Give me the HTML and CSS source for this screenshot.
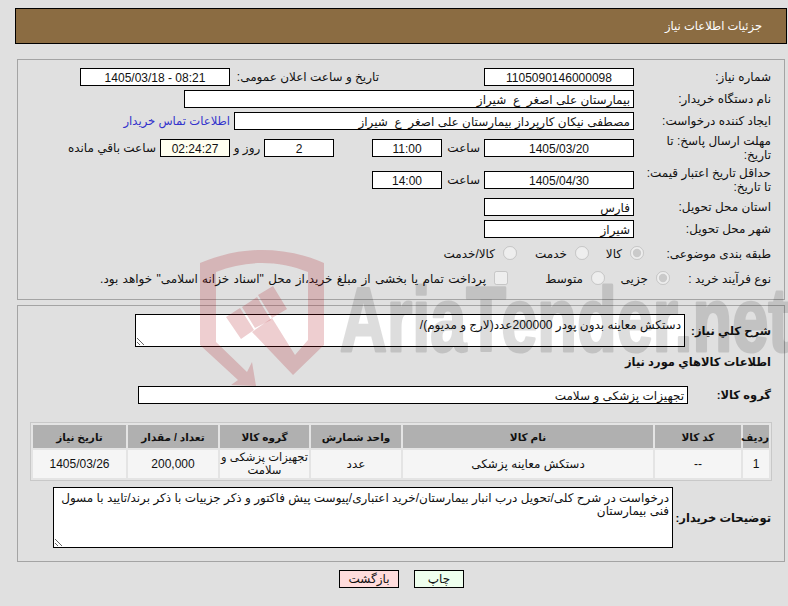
FILE: index.html
```html
<!DOCTYPE html>
<html lang="fa" dir="rtl">
<head>
<meta charset="utf-8">
<title>جزئیات اطلاعات نیاز</title>
<link rel="stylesheet" href="styles.css">
</head>
<body>
<div class="page">
  <header class="title-bar">جزئیات اطلاعات نیاز</header>

  <section class="panel panel-info">
    <div class="row">
      <div class="lbl">شماره نیاز:</div>
      <div class="box w150 center">1105090146000098</div>
      <div class="txt announce">تاریخ و ساعت اعلان عمومی:</div>
      <div class="box w150 center ltr">1405/03/18 - 08:21</div>
    </div>
    <div class="row">
      <div class="lbl">نام دستگاه خریدار:</div>
      <div class="box w450">بیمارستان علی اصغر&nbsp; ع&nbsp; شیراز</div>
    </div>
    <div class="row">
      <div class="lbl">ایجاد کننده درخواست:</div>
      <div class="box w400">مصطفی نیکان کارپرداز بیمارستان علی اصغر&nbsp; ع&nbsp; شیراز</div>
      <a class="link" href="#">اطلاعات تماس خریدار</a>
    </div>
    <div class="row row-tall">
      <div class="lbl">مهلت ارسال پاسخ: تا تاریخ:</div>
      <div class="box w150 center">1405/03/20</div>
      <div class="txt unit">ساعت</div>
      <div class="box w70 center">11:00</div>
      <div class="box w70 center after-gap">2</div>
      <div class="txt day">روز و</div>
      <div class="box w70 center ivory">02:24:27</div>
      <div class="txt remain">ساعت باقي مانده</div>
    </div>
    <div class="row row-tall">
      <div class="lbl">حداقل تاریخ اعتبار قیمت: تا تاریخ:</div>
      <div class="box w150 center">1405/04/30</div>
      <div class="txt unit">ساعت</div>
      <div class="box w70 center">14:00</div>
    </div>
    <div class="row">
      <div class="lbl">استان محل تحویل:</div>
      <div class="box w150">فارس</div>
    </div>
    <div class="row">
      <div class="lbl">شهر محل تحویل:</div>
      <div class="box w150">شیراز</div>
    </div>
    <div class="row row-radio">
      <div class="lbl lbl-kind">طبقه بندی موضوعی:</div>
      <label class="opt opt-a"><input type="radio" name="kind" checked disabled>کالا</label>
      <label class="opt opt-b"><input type="radio" name="kind" disabled>خدمت</label>
      <label class="opt"><input type="radio" name="kind" disabled>کالا/خدمت</label>
    </div>
    <div class="row">
      <div class="lbl lbl-proc">نوع فرآیند خرید :</div>
      <label class="opt opt-c"><input type="radio" name="proc" checked disabled>جزیی</label>
      <label class="opt opt-d"><input type="radio" name="proc" disabled>متوسط</label>
      <label class="opt opt-long"><input type="checkbox" disabled>پرداخت تمام یا بخشی از مبلغ خرید،از محل "اسناد خزانه اسلامی" خواهد بود.</label>
    </div>
  </section>

  <section class="panel panel-items">
    <div class="row row-desc">
      <div class="lbl-b lbl-desc">شرح کلي نیاز:</div>
      <textarea class="area area-desc" readonly>دستکش معاینه بدون پودر 200000عدد(لارج و مدیوم)/</textarea>
    </div>
    <h2 class="heading">اطلاعات کالاهاي مورد نیاز</h2>
    <div class="row">
      <div class="lbl-b lbl-group">گروه کالا:</div>
      <div class="box w550">تجهیزات پزشکی و سلامت</div>
    </div>
    <table class="items">
      <thead>
        <tr>
          <th class="c-row">ردیف</th>
          <th class="c-code">کد کالا</th>
          <th class="c-name">نام کالا</th>
          <th class="c-unit">واحد شمارش</th>
          <th class="c-group">گروه کالا</th>
          <th class="c-qty">تعداد / مقدار</th>
          <th class="c-date">تاریخ نیاز</th>
        </tr>
      </thead>
      <tbody>
        <tr>
          <td>1</td>
          <td>--</td>
          <td>دستکش معاینه پزشکی</td>
          <td>عدد</td>
          <td class="td-tight">تجهیزات پزشکی و سلامت</td>
          <td>200,000</td>
          <td>1405/03/26</td>
        </tr>
      </tbody>
    </table>
    <div class="row row-note">
      <div class="lbl-b lbl-note">توضیحات خریدار:</div>
      <textarea class="area area-note" readonly>درخواست در شرح کلی/تحویل درب انبار بیمارستان/خرید اعتباری/پیوست پیش فاکتور و ذکر جزییات با ذکر برند/تایید با مسول فنی بیمارستان</textarea>
    </div>
  </section>

  <div class="actions">
    <button class="btn btn-print" type="button">چاپ</button>
    <button class="btn btn-back" type="button">بازگشت</button>
  </div>
</div>

<svg class="watermark" viewBox="0 0 788 386" aria-hidden="true">
  <path class="wm-red" d="M200 263C222 254 242 250 262 250C282 250 304 254 324 263L324 345L293 375L252 332L272 318L295 355L308 340L308 272C278 260 246 260 216 272L216 342L247 372L252 362L256 386L231 385L238 380L200 345Z"/>
  <path class="wm-red" d="M226 317L240 308L254 330L241 339ZM242 307L257 297L271 320L255 328ZM258 295L273 286L287 309L272 318Z"/>
  <text class="wm-text" x="340" y="351" textLength="450" lengthAdjust="spacingAndGlyphs">AriaTender.net</text>
</svg>
</body>
</html>
```

FILE: styles.css
```css
* { box-sizing: border-box; }

html, body {
  margin: 0;
  height: 100%;
  overflow: hidden;
}

body {
  position: relative;
  background: #e0e0e0;
  color: #111;
  font-family: "Liberation Sans", "DejaVu Sans", sans-serif;
  font-size: 12px;
}

.page {
  padding-top: 8px;
}

.title-bar {
  height: 36px;
  width: 772px;
  margin-right: 1px;
  padding: 0 24px;
  display: flex;
  align-items: center;
  background: #8b6c42;
  border: 1px solid #000;
  color: #fff;
  font-size: 11.5px;
}

.panel {
  width: 768px;
  margin-right: 3px;
  border: 1px solid #a4a4a4;
  padding-right: 13px;
  display: flex;
  flex-direction: column;
}

.panel-info {
  height: 241px;
  margin-top: 15px;
  padding-top: 8px;
  gap: 4px;
}

.panel-items {
  height: 257px;
  margin-top: 5px;
  padding-top: 8px;
}

.row {
  display: flex;
  align-items: center;
  height: 18px;
  flex: none;
}

.row-tall { height: 28px; }
.row-radio { height: 24px; }

.lbl {
  width: 137px;
  flex: none;
  padding-left: 10px;
  line-height: 14px;
}

.lbl-kind { width: 127px; padding-left: 0; }
.lbl-proc { width: 101px; padding-left: 0; }

.lbl-b, .heading {
  font-weight: bold;
  font-size: 11.5px;
  white-space: nowrap;
}

.box {
  height: 18px;
  flex: none;
  background: #fff;
  border: 1px solid #000;
  padding: 0 3px;
  line-height: 18px;
  white-space: nowrap;
  overflow: hidden;
}

.center { text-align: center; }
.ltr { direction: ltr; }
.ivory { background: #fffff0; }

.w70 { width: 70px; }
.w150 { width: 150px; }
.w400 { width: 400px; }
.w450 { width: 450px; }
.w550 { width: 550px; }

.txt { flex: none; white-space: nowrap; }
.announce { width: 144px; margin: 0 105px 0 5px; }
.unit { width: 42px; padding-right: 4px; }
.after-gap { margin-right: 38px; }
.day { width: 34px; text-align: center; }
.remain { margin-right: 4px; }

.link {
  margin-right: 4px;
  color: #3333cc;
  text-decoration: none;
  white-space: nowrap;
  font-size: 11.6px;
}

.opt {
  display: flex;
  align-items: center;
  flex: none;
  white-space: nowrap;
}

.opt input {
  width: 14px;
  height: 14px;
  margin: -3px 0 0 8px;
  flex: none;
}

.opt-a { width: 55px; }
.opt-b { width: 72px; }
.opt-c { width: 65px; }
.opt-d { width: 97px; }
.opt-long { word-spacing: 1px; }

.row-desc { height: 33px; }
.lbl-desc { width: 86px; flex: none; }

.area {
  display: block;
  flex: none;
  margin: 0;
  background: #fff;
  border: 1px solid #000;
  border-radius: 0;
  outline: none;
  font: inherit;
  color: #111;
  overflow: hidden;
}

.area-desc {
  width: 550px;
  height: 33px;
  padding: 4px 3px 1px;
  line-height: 13px;
}

.heading {
  margin: 8px 0 16px;
  height: 15px;
  line-height: 15px;
}

.lbl-group { width: 83px; flex: none; }

.items {
  width: 741px;
  margin: 18px -1px 0 0;
  border: 1px solid #c8c8c8;
  border-spacing: 2px;
  background: #e4e4e4;
  table-layout: fixed;
  text-align: center;
}

.items th, .items td {
  padding: 0;
  font-size: 12px;
  line-height: 14px;
}

.items th {
  height: 23px;
  background: #b0b0b0;
  font-weight: bold;
  font-size: 10.5px;
}

.items td {
  height: 28px;
  background: #f5f5f5;
}

.items .td-tight { font-size: 11.5px; line-height: 13px; }

.c-row { width: 26px; }
.c-code { width: 86px; }
.c-name { width: 250px; }
.c-unit { width: 90px; }
.c-group { width: 89px; }
.c-qty { width: 90px; }
.c-date { width: 93px; }

.row-note {
  height: 61px;
  margin-top: 6px;
}

.lbl-note { width: 98px; flex: none; }

.area-note {
  width: 620px;
  height: 61px;
  padding: 4px 3px 1px;
  line-height: 13px;
}

.actions {
  display: flex;
  gap: 15px;
  padding-right: 324px;
  margin-top: 8px;
}

.btn {
  height: 18px;
  padding: 0;
  border: 1px solid #000;
  border-radius: 0;
  font: inherit;
  color: #111;
  line-height: 14px;
}

.btn-print { width: 50px; background: #eeffee; }
.btn-back { width: 60px; background: #ffdcdc; }

.watermark {
  position: absolute;
  top: 0;
  left: 0;
  width: 788px;
  height: 386px;
  pointer-events: none;
}

.wm-red {
  fill: rgb(170, 10, 20);
  fill-opacity: 0.2;
}

.wm-text {
  direction: ltr;
  font-family: "Liberation Sans", sans-serif;
  font-weight: bold;
  font-size: 90px;
  fill: #000;
  stroke: #000;
  stroke-width: 3px;
  stroke-linejoin: round;
  opacity: 0.13;
}
```
